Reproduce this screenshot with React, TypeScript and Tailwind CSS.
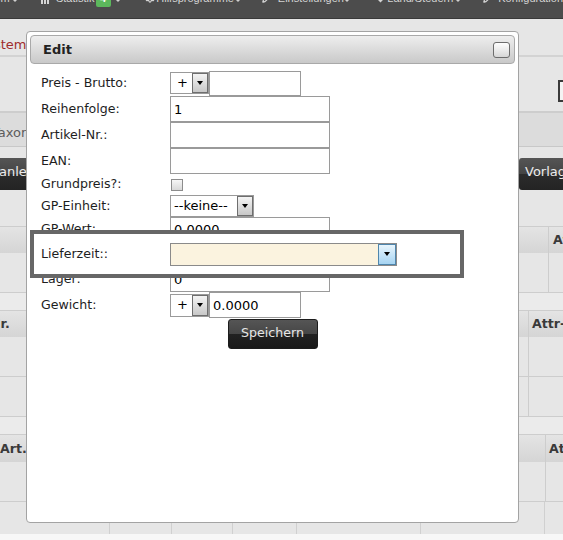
import React from "react";
import { Settings, Pencil } from "lucide-react";

const Caret = () => (
  <span className="mt-[6px] inline-block h-0 w-0 border-l-[3px] border-r-[3px] border-t-[3px] border-l-transparent border-r-transparent border-t-[#cfcfcf]" />
);

const Arrow = () => (
  <span className="inline-block h-0 w-0 border-l-[3.5px] border-r-[3.5px] border-t-[4px] border-l-transparent border-r-transparent border-t-black" />
);

function NavBar() {
  return (
    <div className="h-[19px] overflow-hidden border-b border-[#393939] bg-[#4c4c4c] font-['Liberation_Sans',Arial,sans-serif] text-[11px] text-[#d4d4d4]">
      <div className="-mt-[7px] flex h-[11px] items-start leading-[11px] whitespace-nowrap">
        <span className="-ml-[27px] w-[40px]">System</span>
        <span className="w-[30px]"><Caret /></span>
        <span className="flex w-[16px] items-end gap-[1px] pt-[1px]">
          <span className="h-[9px] w-[2px] bg-[#d4d4d4]" />
          <span className="h-[6px] w-[2px] bg-[#d4d4d4]" />
          <span className="h-[10px] w-[2px] bg-[#d4d4d4]" />
        </span>
        <span className="w-[41px]">Statistik</span>
        <span className="w-[20px]">
          <span className="block h-[14px] w-[15px] rounded-[2px] bg-[#5cb85c] text-center font-bold text-white">4</span>
        </span>
        <span className="w-[31px]"><Caret /></span>
        <span className="w-[12px]"><Settings size={10} strokeWidth={3} className="text-[#d4d4d4]" /></span>
        <span className="w-[82px]">Hilfsprogramme</span>
        <span className="w-[28px]"><Caret /></span>
        <span className="w-[16px]"><Pencil size={10} strokeWidth={3} className="text-[#d4d4d4]" /></span>
        <span className="w-[67px]">Einstellungen</span>
        <span className="w-[34px]"><Caret /></span>
        <span className="w-[11px] pt-[1px]"><span className="block h-[7px] w-[7px] rotate-45 bg-[#d4d4d4]" /></span>
        <span className="w-[70px]">Land/Steuern</span>
        <span className="w-[29px]"><Caret /></span>
        <span className="w-[16px]"><Pencil size={10} strokeWidth={3} className="text-[#d4d4d4]" /></span>
        <span>Konfiguration</span>
      </div>
    </div>
  );
}

function Background() {
  return (
    <div className="bg-[#e6e6e6]">
      <div className="h-[36px] overflow-hidden pt-[18px] text-[13px] leading-[16px] whitespace-nowrap text-[#a02c2c]">
        <div className="-ml-[22px]">System Verwaltung</div>
      </div>
      <div className="h-[2px] bg-[#d3d3d3]" />
      <div className="flex h-[54px] justify-end pt-[23px]">
        <div className="h-[22px] w-[5px] border-2 border-r-0 border-[#3a3a3a] bg-[#f4f4f4]" />
      </div>
      <div className="h-[36px] overflow-hidden border-t-2 border-b border-t-[#cdcdcd] border-b-[#c8c8c8] bg-[#dcdcdc] pt-[12px] text-[13px] leading-[16px] whitespace-nowrap text-[#5c5c5c]">
        <div className="-ml-[8px]">Taxonomie</div>
      </div>
      <div className="h-[11px]" />
      <div className="flex h-[32px] justify-between overflow-hidden text-[13px] text-[#ececec]">
        <div className="flex w-[60px] items-center rounded-r-[3px] bg-[linear-gradient(to_bottom,#555,#444_50%,#2c2c2c_50%,#242424)] pb-[4px] whitespace-nowrap">
          <span className="-ml-[1px]">anlegen</span>
        </div>
        <div className="flex w-[44px] items-center rounded-l-[3px] bg-[linear-gradient(to_bottom,#555,#444_50%,#2c2c2c_50%,#242424)] pb-[4px] pl-[6px] whitespace-nowrap">
          Vorlage
        </div>
      </div>
      <div className="h-[36px]" />

      {/* table 1 */}
      <div className="border-y border-[#cdcdcd]">
        <div className="flex h-[26px] bg-[linear-gradient(to_bottom,#e4e4e4,#d5d5d5)] text-[12.6px] font-bold text-[#3a3a3a]">
          <div className="flex-1" />
          <div className="w-[15px] overflow-hidden border-l border-[#cdcdcd] pl-[4px] leading-[26px] whitespace-nowrap">Attr</div>
        </div>
        <div className="flex h-[39px]">
          <div className="flex-1" />
          <div className="w-[15px] border-l border-[#cdcdcd]" />
        </div>
      </div>
      <div className="h-[17px] bg-[#ebebeb]" />

      {/* table 2 */}
      <div className="border-t border-[#cdcdcd]">
        <div className="flex h-[26px] bg-[linear-gradient(to_bottom,#e4e4e4,#d5d5d5)] text-[12.6px] font-bold leading-[26px] text-[#3a3a3a]">
          <div className="flex-1 overflow-hidden whitespace-nowrap">
            <span className="-ml-[10px] inline-block">Nr.</span>
          </div>
          <div className="w-[35px] overflow-hidden border-l border-[#cdcdcd] pl-[3px] whitespace-nowrap">Attr-Wert</div>
        </div>
        <div className="flex h-[40px] border-b border-[#cdcdcd]">
          <div className="flex-1" />
          <div className="w-[35px] border-l border-[#cdcdcd]" />
        </div>
        <div className="flex h-[40px] border-b border-[#cdcdcd]">
          <div className="flex-1" />
          <div className="w-[35px] border-l border-[#cdcdcd]" />
        </div>
      </div>
      <div className="h-[17px] bg-[#ebebeb]" />

      {/* table 3 */}
      <div className="border-t border-[#cdcdcd]">
        <div className="flex h-[27px] bg-[linear-gradient(to_bottom,#e4e4e4,#d5d5d5)] text-[12.6px] font-bold leading-[27px] text-[#3a3a3a]">
          <div className="flex-1 whitespace-nowrap">Art.-Nr.</div>
          <div className="w-[18px] overflow-hidden border-l border-[#cdcdcd] pl-[3px] whitespace-nowrap">Attr</div>
        </div>
        <div className="flex h-[40px] border-b border-[#cdcdcd]">
          <div className="flex-1" />
          <div className="w-[18px] border-l border-[#cdcdcd]" />
        </div>
        <div className="flex h-[32px]">
          <div className="w-[110px] border-r border-[#d0d0d0]" />
          <div className="w-[62px] border-r border-[#d0d0d0]" />
          <div className="w-[61px] border-r border-[#d0d0d0]" />
          <div className="w-[64px] border-r border-[#d0d0d0]" />
          <div className="w-[124px] border-r border-[#d0d0d0]" />
          <div className="w-[124px] border-r border-[#d0d0d0]" />
          <div className="flex-1" />
        </div>
      </div>
    </div>
  );
}

function TextInput({ value, className }: { value: string; className: string }) {
  return (
    <input
      readOnly
      value={value}
      className={`border border-[#9a9a9a] bg-white pl-[3px] text-[13px] text-black outline-none ${className}`}
    />
  );
}

function GraySelect({ text, className }: { text: string; className: string }) {
  return (
    <div className={`flex items-stretch border border-[#9a9a9a] bg-white text-[13px] text-black ${className}`}>
      <div className="flex flex-1 items-center pl-[3px] whitespace-nowrap">{text}</div>
      <div className="flex w-[16px] items-center justify-center border border-[#6e6e6e] bg-[linear-gradient(to_bottom,#f4f4f4,#c8c8c8)]">
        <Arrow />
      </div>
    </div>
  );
}

function Row({ label, h, children }: { label: string; h: string; children?: React.ReactNode }) {
  return (
    <div className={`flex items-center ${h}`}>
      <div className="w-[129px] whitespace-nowrap">{label}</div>
      {children}
    </div>
  );
}

function EditDialog() {
  return (
    <div className="absolute left-[26px] top-[31px] h-[492px] w-[493px] rounded-[4px] border border-[#a3a3a3] bg-white p-[3px]">
      <div className="flex h-[29px] items-center justify-between rounded-[4px] border border-[#a9a9a9] bg-[linear-gradient(to_bottom,#eeeeee,#c9c9c9)] pl-[12px] pr-[4px]">
        <span className="text-[13px] font-bold text-[#222]">Edit</span>
        <div className="h-[16px] w-[17px] rounded-[3px] border-[1.5px] border-[#6c6c6c] bg-[linear-gradient(to_bottom,#fdfdfd,#ebebeb_50%,#d6d6d6)]" />
      </div>

      <div className="ml-[11px] mt-[6px] text-[12.6px] text-[#1e1e1e]">
        <Row label="Preis - Brutto:" h="h-[26px]">
          <GraySelect text="+" className="h-[22px] w-[39px] [&>div:first-child]:pl-[6px]" />
          <TextInput value="" className="h-[25px] w-[92px]" />
        </Row>
        <Row label="Reihenfolge:" h="h-[26px]">
          <TextInput value="1" className="h-[26px] w-[160px]" />
        </Row>
        <Row label="Artikel-Nr.:" h="h-[26px]">
          <TextInput value="" className="h-[26px] w-[160px]" />
        </Row>
        <Row label="EAN:" h="h-[26px]">
          <TextInput value="" className="h-[26px] w-[160px]" />
        </Row>
        <Row label="Grundpreis?:" h="h-[21px]">
          <div className="ml-[1px] h-[12px] w-[12px] border border-[#8c8c8c] bg-[linear-gradient(to_bottom,#f6f6f6,#d8d8d8)]" />
        </Row>
        <Row label="GP-Einheit:" h="h-[22px]">
          <GraySelect text="--keine--" className="h-[22px] w-[84px]" />
        </Row>
        <Row label="GP-Wert:" h="h-[25px]">
          <TextInput value="0.0000" className="h-[25px] w-[160px]" />
        </Row>
        <div className="relative flex h-[24px] items-center">
          <div className="absolute -left-[11px] -top-[12px] h-[48px] w-[434px] border-4 border-[#676767] bg-white" />
          <div className="relative z-10 w-[129px] whitespace-nowrap">Lieferzeit::</div>
          <div className="relative z-10 flex h-[23px] w-[227px] items-stretch border border-[#8a8a8a] bg-[#fbf3df]">
            <div className="flex-1" />
            <div className="flex w-[18px] items-center justify-center border border-[#4f86ad] bg-[linear-gradient(to_bottom,#e8f5fd,#a6d4f2)]">
              <Arrow />
            </div>
          </div>
        </div>
        <Row label="Lager:" h="h-[26px]">
          <TextInput value="0" className="h-[26px] w-[160px]" />
        </Row>
        <Row label="Gewicht:" h="h-[26px]">
          <GraySelect text="+" className="h-[23px] w-[39px] [&>div:first-child]:pl-[6px]" />
          <TextInput value="0.0000" className="h-[26px] w-[92px]" />
        </Row>
      </div>

      <div className="mt-[1px] flex justify-center">
        <div className="flex h-[30px] w-[90px] items-center justify-center rounded-[3px] border border-[#1c1c1c] bg-[linear-gradient(to_bottom,#555,#464646_50%,#222_50%,#191919)] pb-[2px] text-[12.6px] text-[#e6e6e6]">
          Speichern
        </div>
      </div>
    </div>
  );
}

export default function App() {
  return (
    <div className="relative h-[540px] w-[563px] overflow-hidden bg-[#f7f7f7] font-['DejaVu_Sans',sans-serif]">
      <NavBar />
      <Background />
      <EditDialog />
    </div>
  );
}
